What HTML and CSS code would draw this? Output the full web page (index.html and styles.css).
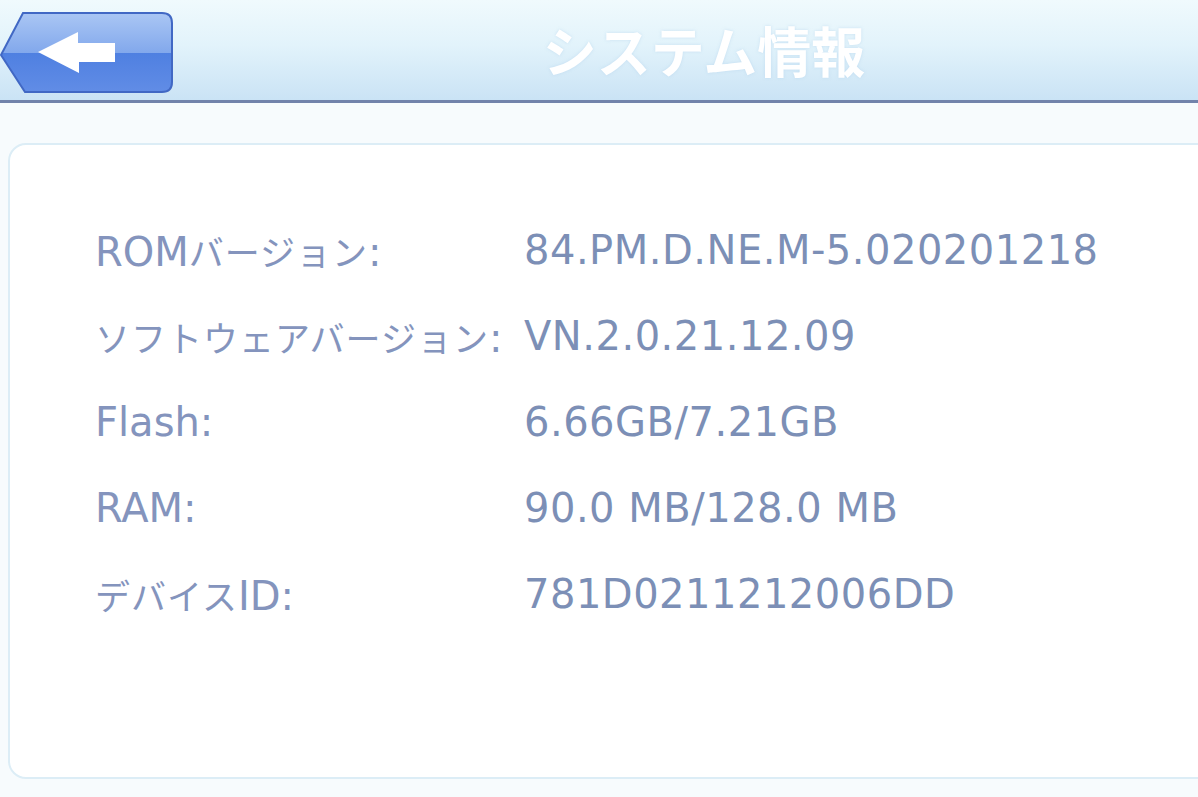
FILE: index.html
```html
<!DOCTYPE html>
<html lang="ja">

<head>
    <meta charset="UTF-8">
    <meta name="viewport" content="width=device-width, initial-scale=1.0">
    <title>システム情報</title>
    <link rel="stylesheet" href="styles.css">
</head>

<body>
    <!-- Title bar -->
    <div class="topbar">
        <div class="back">
            <svg width="174" height="82" viewBox="0 0 174 82">
                <defs>
                    <linearGradient id="btnTop" x1="0" y1="0" x2="0" y2="1">
                        <stop offset="0" stop-color="#abc7f4"/>
                        <stop offset="1" stop-color="#82a8ec"/>
                    </linearGradient>
                    <linearGradient id="btnBottom" x1="0" y1="0" x2="0" y2="1">
                        <stop offset="0" stop-color="#4f80e1"/>
                        <stop offset="1" stop-color="#628de6"/>
                    </linearGradient>
                    <clipPath id="btnShape">
                        <path d="M1 43 L23 1 H162 Q172 1 172 11 V70 Q172 80 162 80 H25 Z"/>
                    </clipPath>
                </defs>
                <g clip-path="url(#btnShape)">
                    <rect x="0" y="0" width="174" height="41" fill="url(#btnTop)"/>
                    <rect x="0" y="41" width="174" height="41" fill="url(#btnBottom)"/>
                </g>
                <path d="M1 43 L23 1 H162 Q172 1 172 11 V70 Q172 80 162 80 H25 Z" fill="none" stroke="#4168c4" stroke-width="2"/>
                <path d="M38 40 L78 20 V31 H115 V50 H79 V61 Z" fill="#ffffff"/>
            </svg>
        </div>
        <div class="title">システム情報</div>
    </div>

    <!-- Info panel -->
    <div class="panel">
        <div class="row">
            <div class="label">ROM<span class="kana">バージョン</span>:</div>
            <div class="value">84.PM.D.NE.M-5.020201218</div>
        </div>
        <div class="row">
            <div class="label"><span class="kana">ソフトウェアバージョン</span>:</div>
            <div class="value">VN.2.0.21.12.09</div>
        </div>
        <div class="row">
            <div class="label">Flash:</div>
            <div class="value">6.66GB/7.21GB</div>
        </div>
        <div class="row">
            <div class="label">RAM:</div>
            <div class="value">90.0 MB/128.0 MB</div>
        </div>
        <div class="row">
            <div class="label"><span class="kana">デバイス</span>ID:</div>
            <div class="value">781D0211212006DD</div>
        </div>
    </div>
</body>
</html>
```

FILE: styles.css
```css
body {
    margin: 0;
    width: 1198px;
    height: 797px;
    overflow: hidden;
    background-color: #f7fbfd;
    font-family: "DejaVu Sans", "Noto Sans CJK JP", sans-serif;
}

.topbar {
    display: flex;
    align-items: flex-start;
    height: 100px;
    border-bottom: 3px solid #7283ab;
    background: linear-gradient(180deg, #f0fafd 0%, #e2f3fb 45%, #cae3f5 100%);
}

.back {
    margin-top: 12px;
    width: 174px;
    height: 82px;
}

.back svg {
    display: block;
}

.title {
    flex: 1;
    padding-left: 36px;
    text-align: center;
    line-height: 100px;
    font-family: "Noto Sans CJK JP", sans-serif;
    font-size: 54px;
    font-weight: bold;
    color: #ffffff;
    text-shadow: 0 0 3px rgba(170, 205, 235, 0.5);
}

.panel {
    margin: 40px -20px 0 8px;
    height: 636px;
    padding: 62px 0 0 85px;
    box-sizing: border-box;
    background-color: #ffffff;
    border: 2px solid #dcedf6;
    border-radius: 18px;
}

.row {
    display: grid;
    grid-template-columns: 429px 1fr;
    align-items: center;
    height: 86px;
}

.label {
    font-size: 40px;
    color: #8494bd;
}

.kana {
    font-family: "Noto Sans CJK JP", sans-serif;
    font-size: 35px;
    letter-spacing: 1px;
}

.value {
    font-size: 40px;
    letter-spacing: 0.5px;
    color: #7c8fb6;
}
```
